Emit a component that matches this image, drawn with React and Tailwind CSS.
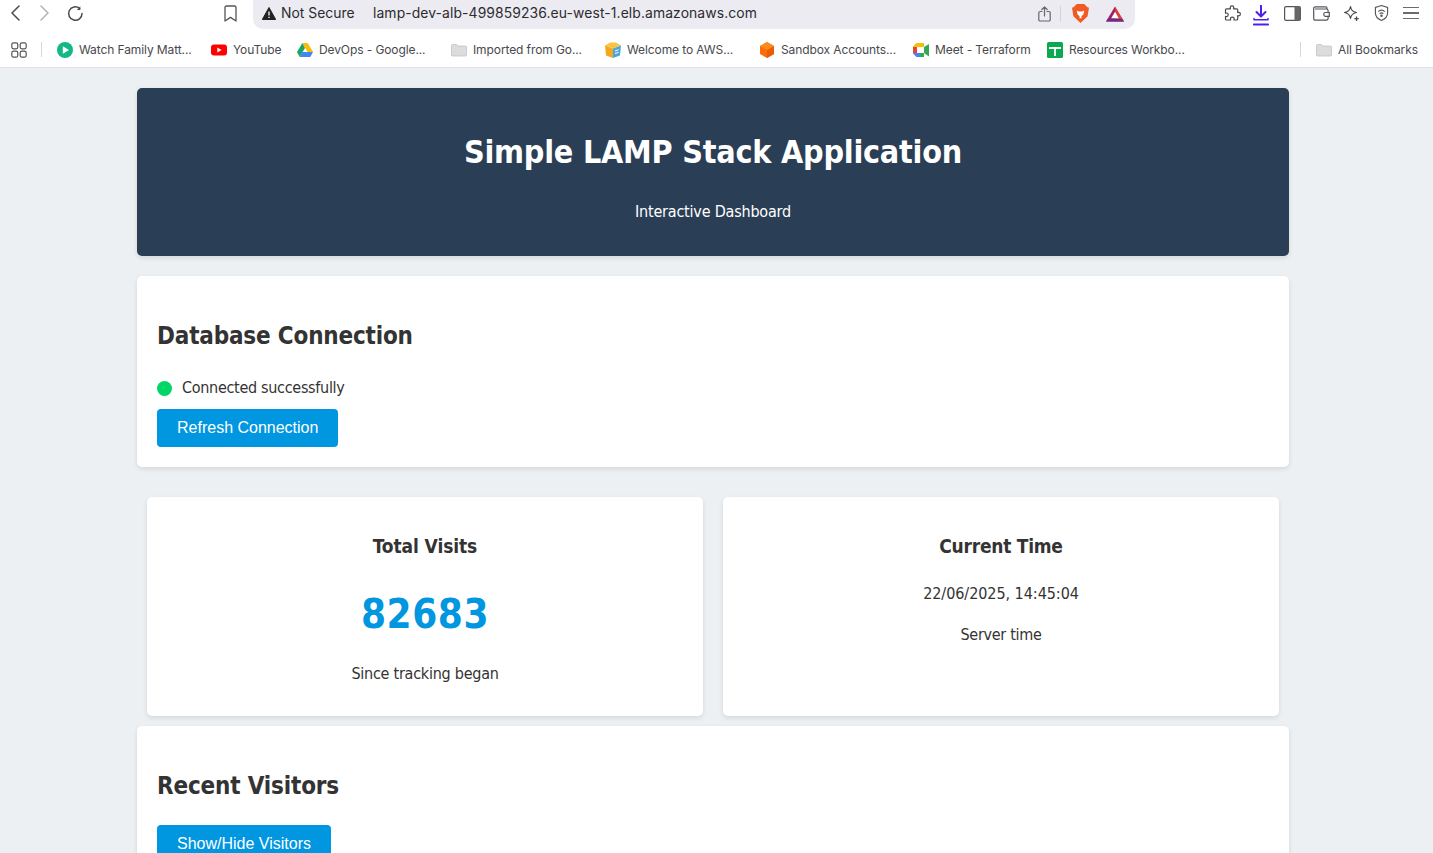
import React from 'react';

const uiFont = "font-['Inter','Liberation_Sans',sans-serif]";

function Folder() {
  return (
    <svg width="16" height="14" viewBox="0 0 16 14">
      <path d="M0.500 2.500a1 1 0 0 1 1-1h4l1.500 1.500h7.500a1 1 0 0 1 1 1v8a1 1 0 0 1-1 1h-13a1 1 0 0 1-1-1z" fill="#dcdcdc" stroke="#bdbdbd" strokeWidth="0.700" />
    </svg>
  );
}

const bookmarks = [
  {
    label: 'Watch Family Matt...',
    w: 'w-[154px]',
    icon: (
      <svg width="16" height="16" viewBox="0 0 16 16">
        <circle cx="8" cy="8" r="8" fill="#12b886" />
        <path d="M5.800 4.200 12 8l-6.200 3.800z" fill="#fff" />
      </svg>
    ),
  },
  {
    label: 'YouTube',
    w: 'w-[86px]',
    icon: (
      <svg width="16" height="12" viewBox="0 0 16 12">
        <rect width="16" height="11" y="0.500" rx="3" fill="#f00" />
        <path d="M6.300 3.500 10.600 6l-4.300 2.500z" fill="#fff" />
      </svg>
    ),
  },
  {
    label: 'DevOps - Google...',
    w: 'w-[154px]',
    icon: (
      <svg width="16" height="14" viewBox="0 0 16 14">
        <path d="M5.300 0h5.400l5.300 9h-5.400z" fill="#fbbc04" />
        <path d="M5.300 0 0 9l2.700 5 5.300-9z" fill="#1fa463" />
        <path d="M5.300 9H16l-2.700 5H2.700z" fill="#4285f4" />
      </svg>
    ),
  },
  { label: 'Imported from Go...', w: 'w-[154px]', icon: <Folder /> },
  {
    label: 'Welcome to AWS...',
    w: 'w-[154px]',
    icon: (
      <svg width="16" height="16" viewBox="0 0 16 16">
        <path d="M0 3.500 5 0.500h6l5 3-8 3z" fill="#f9c642" />
        <path d="M0 3.500l8 3V16l-7-2.500z" fill="#f5a81c" />
        <path d="M8 6.500l8-3-1 10L8 16z" fill="#4fa8dc" />
        <path d="M10 9l3.500-1.200M10 11.500l3.500-1.200" stroke="#fff" strokeWidth="1" />
      </svg>
    ),
  },
  {
    label: 'Sandbox Accounts...',
    w: 'w-[154px]',
    icon: (
      <svg width="16" height="16" viewBox="0 0 16 16">
        <path d="M8 0l7 4v8l-7 4-7-4V4z" fill="#f96e0a" />
        <path d="M8 8l7-4v8l-7 4z" fill="#e85d04" />
        <path d="M1 4l7-4 7 4-7 4z" fill="#ff8a1f" />
      </svg>
    ),
  },
  {
    label: 'Meet - Terraform',
    w: 'w-[134px]',
    icon: (
      <svg width="16" height="14" viewBox="0 0 16 14">
        <path d="M3.500 0H11v4H4v3H0V3.500z" fill="#fbbc04" />
        <path d="M0 7h4v3h7v4H3.500L0 10.500z" fill="#4285f4" />
        <path d="M0 4h4v6H0z" fill="#ea4335" />
        <path d="M7 10h4v4H7zM11 4v6l5 3.500V1z" fill="#34a853" />
        <path d="M4 4h7v6H4z" fill="#fff" />
      </svg>
    ),
  },
  {
    label: 'Resources Workbo...',
    w: 'w-[160px]',
    icon: (
      <svg width="16" height="16" viewBox="0 0 16 16">
        <rect width="16" height="16" rx="1.500" fill="#0aa84f" />
        <path d="M2 6h12M8 6v8" stroke="#fff" strokeWidth="1.800" />
      </svg>
    ),
  },
];

function Toolbar() {
  return (
    <div className={`${uiFont} bg-white h-[68px] border-b border-[#dfe3e8]`}>
      {/* address row */}
      <div className="flex items-start h-[29px]">
        <div className="flex items-center h-[26px] w-[224px] pl-[11px]">
          <svg width="9" height="16" viewBox="0 0 9 16" fill="none" stroke="#4a4a4f" strokeWidth="1.500" strokeLinecap="round" strokeLinejoin="round">
            <path d="M8 1 1 8l7 7" />
          </svg>
          <svg width="9" height="16" viewBox="0 0 9 16" fill="none" stroke="#b4b4b8" strokeWidth="1.500" strokeLinecap="round" strokeLinejoin="round" className="ml-[20px]">
            <path d="M1 1l7 7-7 7" />
          </svg>
          <svg width="17" height="17" viewBox="0 0 17 17" fill="none" stroke="#4a4a4f" strokeWidth="1.500" strokeLinecap="round" className="ml-[18px]">
            <path d="M15 8.500a6.700 6.700 0 1 1-2.300-5" />
            <path d="M13.300 1.300v3.600H9.800" fill="#4a4a4f" stroke="none" />
          </svg>
        </div>
        <div className="w-[29px] h-[26px] flex items-center">
          <svg width="13" height="17" viewBox="0 0 13 17" fill="none" stroke="#55555a" strokeWidth="1.300" strokeLinejoin="round">
            <path d="M1 2.500A1.500 1.500 0 0 1 2.500 1h8A1.500 1.500 0 0 1 12 2.500V16l-5.500-3.600L1 16z" />
          </svg>
        </div>
        <div className="w-[882px] h-[29px] bg-[#ecebf1] rounded-b-[10px] flex items-center pl-[9px] pb-[2px] text-[13.900px] text-[#2b2b30]">
          <svg width="14" height="13" viewBox="0 0 14 13" className="mr-[5px]">
            <path d="M7 0.500 13.700 12.500H0.300z" fill="#222" stroke="#222" strokeLinejoin="round" />
            <path d="M7 4.500v4M7 9.700v1.200" stroke="#fff" strokeWidth="1.300" />
          </svg>
          <span className="w-[92px]">Not Secure</span>
          <span className="flex-1 tracking-[0.100px]">lamp-dev-alb-499859236.eu-west-1.elb.amazonaws.com</span>
          <svg width="13" height="16" viewBox="0 0 13 16" fill="none" stroke="#66666b" strokeWidth="1.200" strokeLinecap="round" strokeLinejoin="round">
            <path d="M4 5.500H2a1.200 1.200 0 0 0-1.200 1.200v7.100A1.200 1.200 0 0 0 2 15h9a1.200 1.200 0 0 0 1.200-1.200V6.700A1.200 1.200 0 0 0 11 5.500H9" />
            <path d="M6.500 10V1M3.800 3.500 6.500 1l2.700 2.500" />
          </svg>
          <div className="w-px h-[16px] bg-[#d2d2d8] ml-[9px] mr-[11px]" />
          <svg width="17" height="19" viewBox="0 0 18 20" className="mr-[17px]">
            <path d="M2 3l3-3h8l3 3 2 1-1.500 9L9 20l-7.500-7L0 4z" fill="#f15a22" />
            <path d="M5 7l3 1h2l3-1-1 4-2 2v2H8v-2l-2-2z" fill="#fff" />
          </svg>
          <svg width="18" height="16" viewBox="0 0 19 16" className="mr-[11px]">
            <path d="M9.500 0 19 16H0z" fill="#9e1f63" />
            <path d="M9.500 0 19 16H9.500z" fill="#ff4724" opacity="0.700" />
            <path d="M0 16h19l-2-3H2z" fill="#662d91" />
            <path d="M9.500 5.500 13.500 12.500h-8z" fill="#fff" />
          </svg>
        </div>
        <div className="flex h-[26px] pl-[82px] [&>div]:w-[30px] [&>div]:h-[26px] [&>div]:flex [&>div]:items-center [&>div]:justify-center">
          <div>
            <svg width="17" height="17" viewBox="0 0 17 17" fill="none" stroke="#4a4a4f" strokeWidth="1.200" strokeLinejoin="round">
              <path d="M6.200 2.600C6.200 1.500 7 .8 8 .8s1.800.7 1.800 1.800c0 .5-.2.900-.3 1.200h3.200c.6 0 1 .4 1 1v2.800c.4-.2.700-.3 1-.3 1 0 1.700.8 1.700 1.800s-.7 1.800-1.700 1.800c-.3 0-.6-.1-1-.3V14c0 .6-.4 1-1 1H9.900c.2-.4.300-.7.300-1.100 0-1-.8-1.700-1.900-1.700s-1.900.7-1.900 1.700c0 .4.100.7.300 1.100H2.500c-.6 0-1-.4-1-1v-2.700c.4.200.7.300 1 .3 1 0 1.700-.8 1.700-1.800S3.500 8 2.500 8c-.3 0-.6.100-1 .3V4.800c0-.6.400-1 1-1h4c-.2-.3-.3-.7-.3-1.200z" />
            </svg>
          </div>
          <div className="!items-start">
            <svg width="16" height="21" viewBox="0 0 16 21" fill="none" stroke="#4c1ff0" strokeLinecap="round" strokeLinejoin="round" className="mt-[5px] mr-[2px]">
              <path d="M8 .8V11M3.500 7 8 11.500 12.500 7" strokeWidth="2" />
              <path d="M0.800 19.500h14.400" strokeWidth="1.800" />
              <path d="M1 13.500v1.200h14v-1.200" strokeWidth="1.400" />
            </svg>
          </div>
          <div>
            <svg width="17" height="15" viewBox="0 0 17 15">
              <rect x="0.600" y="0.600" width="15.800" height="13.800" rx="1.500" fill="none" stroke="#55555a" strokeWidth="1.200" />
              <path d="M10.500 0.600h4.400a1.500 1.500 0 0 1 1.500 1.500v10.800a1.500 1.500 0 0 1-1.500 1.500h-4.400z" fill="#66666b" />
            </svg>
          </div>
          <div>
            <svg width="17" height="15" viewBox="0 0 17 15" fill="none" stroke="#55555a" strokeWidth="1.200" className="mr-[2px]">
              <path d="M14 3V2.100A1.300 1.300 0 0 0 12.700.8H2.400A1.700 1.700 0 0 0 .7 2.500v10a1.700 1.700 0 0 0 1.700 1.700h11a1.700 1.700 0 0 0 1.700-1.700V4.700A1.700 1.700 0 0 0 13.400 3H2" />
              <path d="M16.300 6.500h-4a1.500 1.500 0 0 0-1.500 1.500v.8a1.500 1.500 0 0 0 1.500 1.500h4z" fill="#fff" />
            </svg>
          </div>
          <div>
            <svg width="17" height="17" viewBox="0 0 17 17" fill="none" stroke="#4a4a4f" strokeWidth="1.200" strokeLinejoin="round" className="mr-[2px]">
              <path d="M7.500 1.500c.5 3.700 2 5.300 6 6-4 .7-5.500 2.300-6 6-.5-3.700-2-5.300-6-6 4-.7 5.500-2.300 6-6z" />
              <path d="M13.500 11.500v4.500M11.300 13.700h4.500" strokeWidth="1.300" />
            </svg>
          </div>
          <div>
            <svg width="15" height="18" viewBox="0 0 16 18" fill="none" stroke="#55555a" strokeWidth="1.200" className="mr-[2px]">
              <path d="M8 1l6.500 2v6c0 4-3 6.500-6.500 8-3.500-1.500-6.500-4-6.500-8V3z" />
              <path d="M4.500 7.500c2-1.700 5-1.700 7 0M6 9.700c1.200-1 2.800-1 4 0" />
              <circle cx="8" cy="12" r="0.700" fill="#55555a" />
            </svg>
          </div>
          <div>
            <div className="flex flex-col gap-[4px] w-[16px] mr-[2px]">
              <div className="h-[1.500px] bg-[#6a6a6f]" />
              <div className="h-[1.500px] bg-[#6a6a6f]" />
              <div className="h-[1.500px] bg-[#6a6a6f]" />
            </div>
          </div>
        </div>
      </div>
      {/* bookmarks row */}
      <div className="flex items-center h-[38px] pt-[3px] text-[12px] tracking-[-0.100px] text-[#48484d]">
        <svg width="16" height="16" viewBox="0 0 16 16" fill="none" stroke="#55555a" strokeWidth="1.200" className="ml-[11px]">
          <rect x="0.800" y="0.800" width="6" height="6" rx="1.800" />
          <rect x="9.200" y="0.800" width="6" height="6" rx="1.800" />
          <rect x="0.800" y="9.200" width="6" height="6" rx="1.800" />
          <rect x="9.200" y="9.200" width="6" height="6" rx="1.800" />
        </svg>
        <div className="w-px h-[15px] bg-[#d8d8dc] ml-[14px] mr-[15px]" />
        <div className="flex items-center">
          {bookmarks.map(b => (
            <div key={b.label} className={`flex items-center gap-[6px] whitespace-nowrap ${b.w}`}>
              <span className="w-[16px] flex justify-center">{b.icon}</span>
              <span>{b.label}</span>
            </div>
          ))}
        </div>
        <div className="w-px h-[15px] bg-[#d8d8dc] ml-[93px] mr-[15px]" />
        <div className="flex items-center gap-[6px] whitespace-nowrap">
          <Folder />
          <span>All Bookmarks</span>
        </div>
      </div>
    </div>
  );
}

const pageFont = "font-['DejaVu_Sans',sans-serif] font-stretch-condensed";
const btn = "bg-[#0096e0] text-white rounded-[4px] text-[16px] font-['Liberation_Sans',sans-serif] font-stretch-normal px-5 h-[38px]";

function App() {
  return (
    <div className="h-[853px] overflow-hidden bg-[#ecf0f3]">
      <Toolbar />
      <main className={`${pageFont} pl-[137px] pt-[20px] text-[#333]`}>
        <div className="w-[1152px]">
          <header className="h-[168px] bg-[#2a3e55] rounded-[5px] text-white text-center shadow-[0_2px_5px_rgba(0,0,0,0.1)] pt-[41px]">
            <h1 className="text-[32px] leading-[46px] font-bold tracking-[-0.230px]">Simple LAMP Stack Application</h1>
            <p className="text-[16px] leading-[20px] mt-[27px] tracking-[-0.200px]">Interactive Dashboard</p>
          </header>

          <section className="mt-[20px] h-[191px] bg-white rounded-[5px] shadow-[0_2px_5px_rgba(0,0,0,0.1)] px-5 pt-[42px]">
            <h2 className="text-[24px] leading-[36px] font-bold tracking-[-0.180px]">Database Connection</h2>
            <div className="flex items-center mt-[22px] h-[24px]">
              <span className="w-[15px] h-[15px] rounded-full bg-[#00d566] mr-[10px]" />
              <span className="text-[16px] tracking-[-0.300px]">Connected successfully</span>
            </div>
            <button className={`${btn} mt-[9px]`}>Refresh Connection</button>
          </section>

          <div className="grid grid-cols-2 gap-5 px-[10px] mt-[30px]">
            <div className="h-[219px] bg-white rounded-[5px] shadow-[0_2px_5px_rgba(0,0,0,0.1)] text-center pt-[36px]">
              <h3 className="text-[19px] leading-[27px] font-bold tracking-[-0.100px]">Total Visits</h3>
              <div className="text-[40px] leading-[56px] font-bold text-[#0096e0] mt-[26px] tracking-[0.600px]">82683</div>
              <p className="text-[16px] leading-[24px] mt-[20px] tracking-[-0.250px]">Since tracking began</p>
            </div>
            <div className="h-[219px] bg-white rounded-[5px] shadow-[0_2px_5px_rgba(0,0,0,0.1)] text-center pt-[36px]">
              <h3 className="text-[19px] leading-[27px] font-bold tracking-[-0.250px]">Current Time</h3>
              <p className="text-[16px] leading-[24px] mt-[22px] tracking-[-0.050px]">22/06/2025, 14:45:04</p>
              <p className="text-[16px] leading-[24px] mt-[17px] tracking-[-0.300px]">Server time</p>
            </div>
          </div>

          <section className="mt-[10px] h-[200px] bg-white rounded-[5px] shadow-[0_2px_5px_rgba(0,0,0,0.1)] px-5 pt-[42px]">
            <h2 className="text-[24px] leading-[36px] font-bold tracking-[-0.170px]">Recent Visitors</h2>
            <button className={`${btn} mt-[21px]`}>Show/Hide Visitors</button>
          </section>
        </div>
      </main>
    </div>
  );
}

export default App;
